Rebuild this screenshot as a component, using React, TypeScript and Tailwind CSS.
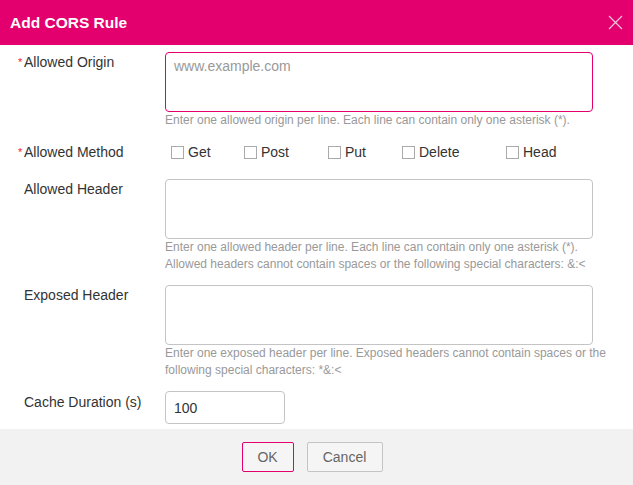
import React from "react";

const font = { fontFamily: '"Liberation Sans", Arial, sans-serif' };

function Label({ text, required, className = "" }: { text: string; required?: boolean; className?: string }) {
  return (
    <div className={`w-[165px] shrink-0 flex pl-[18px] text-[14px] text-[#333] ${className}`}>
      <span className="w-[6px] text-[#f5222d] text-[11px] leading-[20px]">{required ? "*" : ""}</span>
      <span>{text}</span>
    </div>
  );
}

function Hint({ lines }: { lines: string[] }) {
  return (
    <div className="pl-[165px] text-[12px] leading-[17px] text-[#999]">
      {lines.map((l, i) => (
        <div key={i}>{l}</div>
      ))}
    </div>
  );
}

function Check({ label, w }: { label: string; w: string }) {
  return (
    <div className={`flex items-center ${w}`}>
      <span className="w-[13px] h-[13px] border border-[#aaa] bg-white mr-[4px]" />
      <span className="text-[14px] text-[#333]">{label}</span>
    </div>
  );
}

export default function App() {
  return (
    <div className="w-[633px] h-[485px] bg-white flex flex-col overflow-hidden" style={font}>
      <div className="h-[45px] bg-[#e3006e] flex items-center justify-between pl-[10px] pr-[10px] shrink-0">
        <span className="text-white font-bold text-[15.5px]">Add CORS Rule</span>
        <svg width="15" height="15" viewBox="0 0 15 15">
          <path d="M1 1 L14 14 M14 1 L1 14" stroke="#f6c3dc" strokeWidth="1.2" fill="none" />
        </svg>
      </div>

      <div className="flex-1 flex flex-col">
        <div className="flex mt-[7px] leading-[20px]">
          <Label text="Allowed Origin" required />
          <div className="w-[428px] h-[60px] border border-[#e3006e] rounded-[4px] px-[8px] py-[3px] text-[14px] text-[#999]">
            www.example.com
          </div>
        </div>
        <Hint lines={["Enter one allowed origin per line. Each line can contain only one asterisk (*)."]} />

        <div className="flex items-center mt-[12px] h-[22px] leading-[20px]">
          <Label text="Allowed Method" required />
          <div className="flex items-center pl-[6px]">
            <Check label="Get" w="w-[73px]" />
            <Check label="Post" w="w-[84px]" />
            <Check label="Put" w="w-[74px]" />
            <Check label="Delete" w="w-[104px]" />
            <Check label="Head" w="w-[80px]" />
          </div>
        </div>

        <div className="flex mt-[16px] leading-[20px]">
          <Label text="Allowed Header" />
          <div className="w-[428px] h-[60px] border border-[#c4c4c4] rounded-[4px]" />
        </div>
        <Hint
          lines={[
            "Enter one allowed header per line. Each line can contain only one asterisk (*).",
            "Allowed headers cannot contain spaces or the following special characters: &:<",
          ]}
        />

        <div className="flex mt-[12px] leading-[20px]">
          <Label text="Exposed Header" />
          <div className="w-[428px] h-[60px] border border-[#c4c4c4] rounded-[4px]" />
        </div>
        <Hint
          lines={[
            "Enter one exposed header per line. Exposed headers cannot contain spaces or the",
            "following special characters: *&:<",
          ]}
        />

        <div className="flex mt-[12px] leading-[22px]">
          <Label text="Cache Duration (s)" />
          <div className="w-[120px] h-[33px] border border-[#c4c4c4] rounded-[4px] px-[8px] flex items-center text-[14px] text-[#333]">
            100
          </div>
        </div>
      </div>

      <div className="h-[56px] bg-[#f2f2f2] flex items-center justify-center gap-[13px] pr-[9px] shrink-0">
        <button className="w-[52px] h-[30px] border border-[#e3006e] rounded-[2px] bg-[#f5f5f5] text-[14px] text-[#666]">
          OK
        </button>
        <button className="w-[76px] h-[30px] border border-[#c4c4c4] rounded-[2px] bg-[#f5f5f5] text-[14px] text-[#666]">
          Cancel
        </button>
      </div>
    </div>
  );
}
